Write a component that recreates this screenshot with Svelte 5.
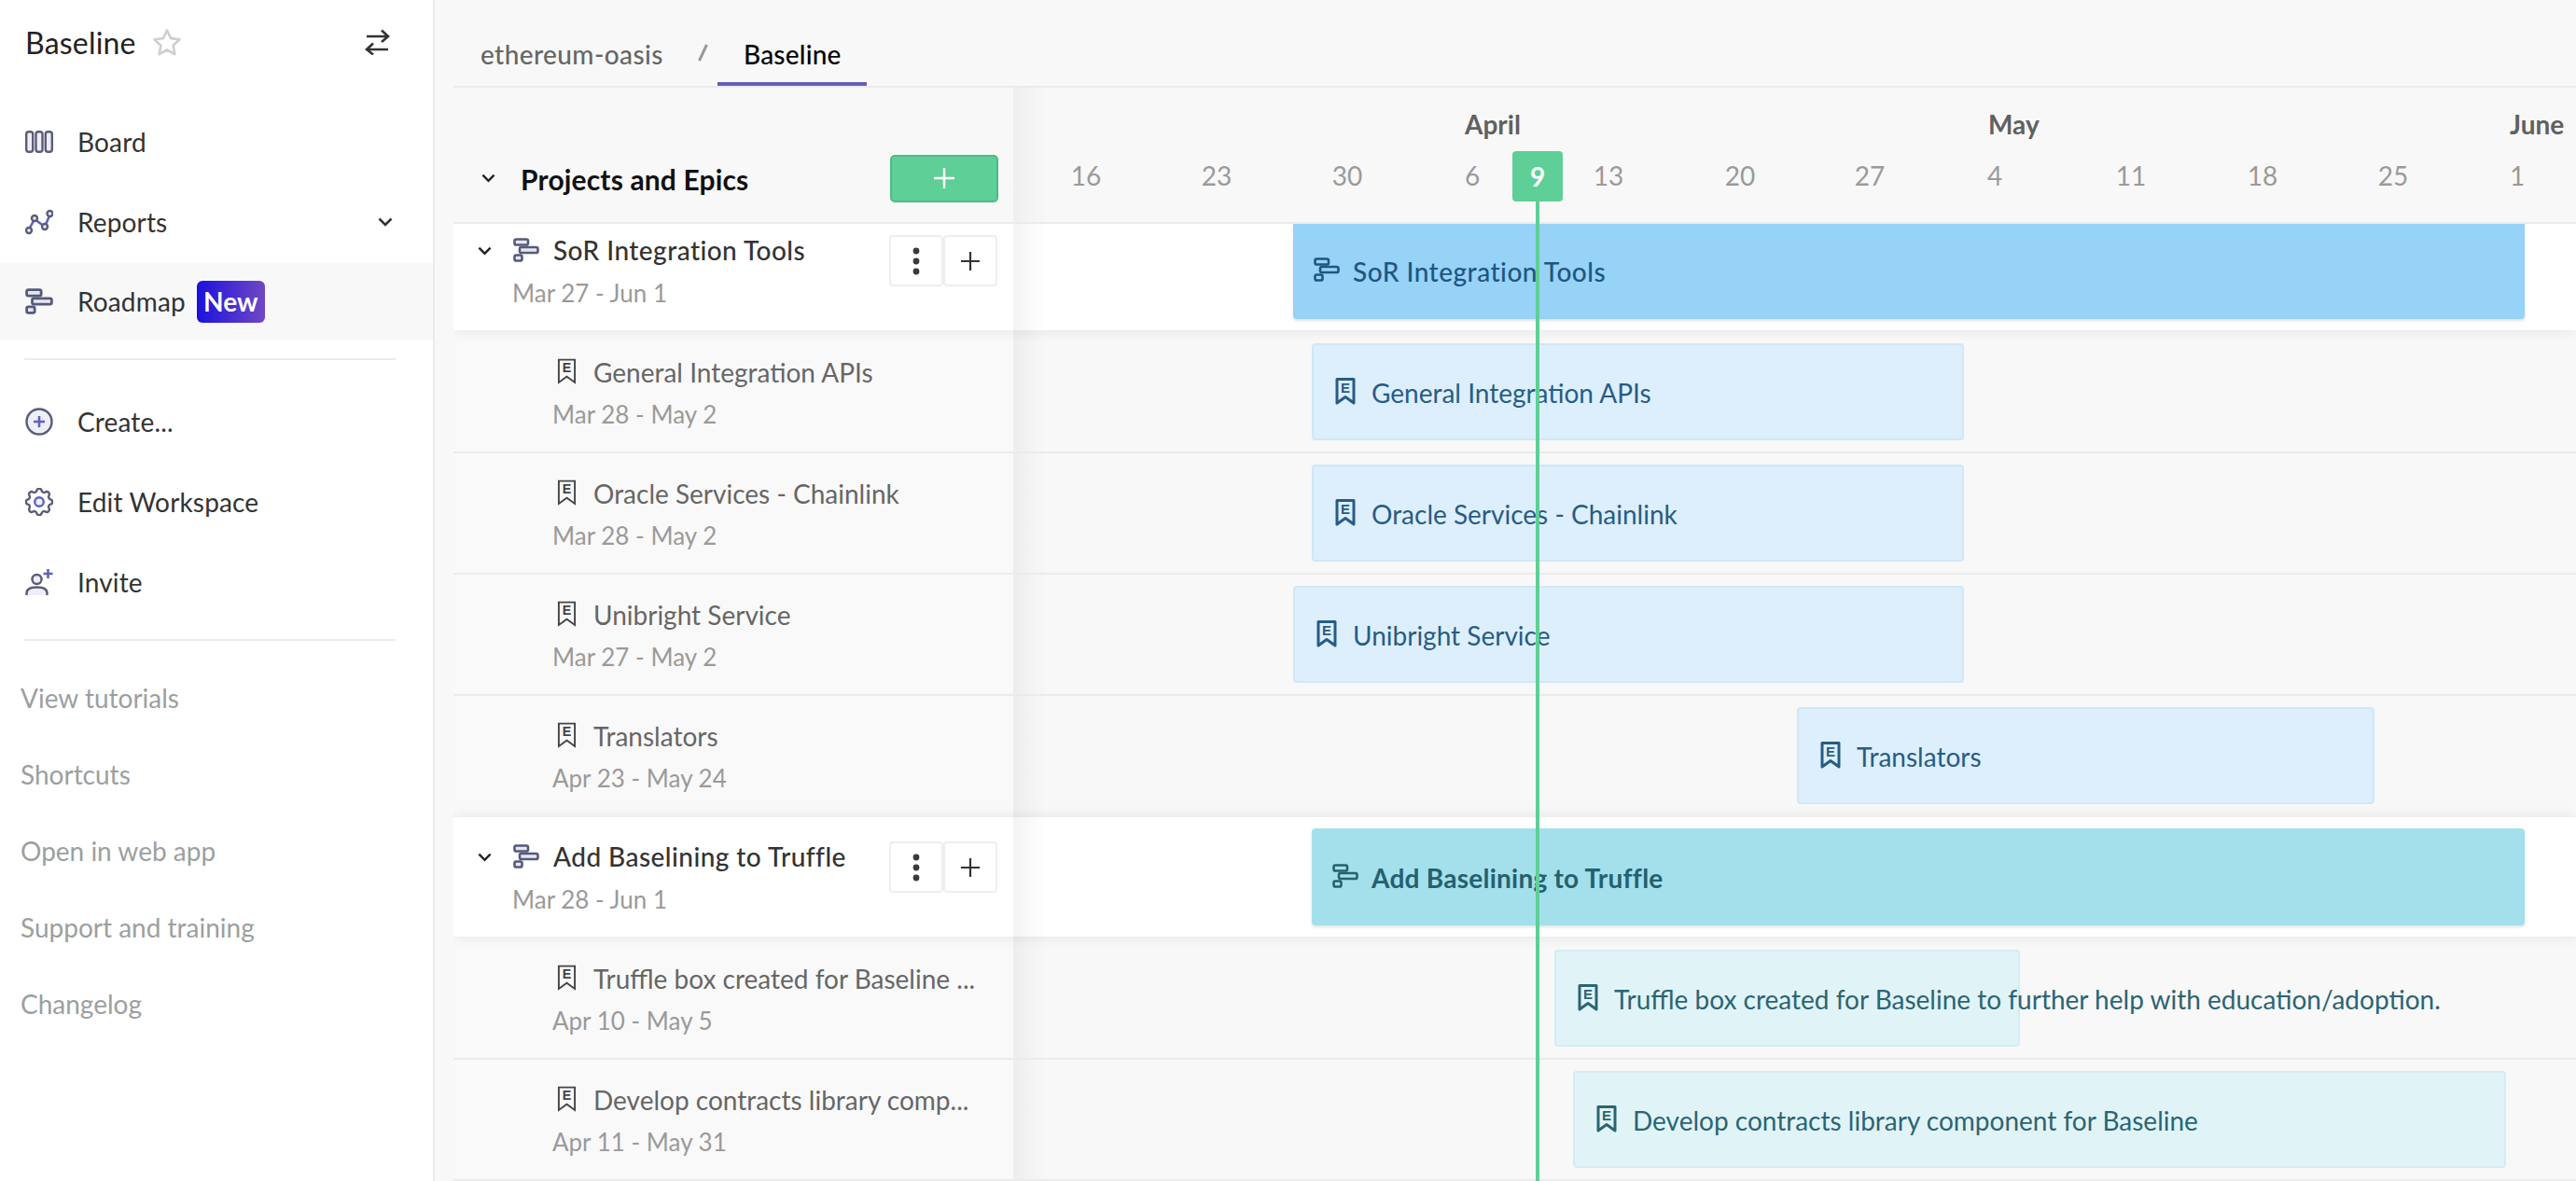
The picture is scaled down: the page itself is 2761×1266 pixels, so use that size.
<script>
  const ORIGIN = 1086;
  const months = [
    { label: 'April', x: 1570 },
    { label: 'May', x: 2131 },
    { label: 'June', x: 2690 }
  ];
  const dates = [
    ['16', 1164], ['23', 1304], ['30', 1444], ['6', 1578], ['13', 1724], ['20', 1865],
    ['27', 2004], ['4', 2138], ['11', 2284], ['18', 2425], ['25', 2565], ['1', 2698]
  ];
  const rows = [
    { kind: 'epic', tone: 'blue', title: 'SoR Integration Tools', range: 'Mar 27 - Jun 1', from: 1386, to: 2706 },
    { kind: 'item', tone: 'blue', title: 'General Integration APIs', range: 'Mar 28 - May 2', from: 1406, to: 2105 },
    { kind: 'item', tone: 'blue', title: 'Oracle Services - Chainlink', range: 'Mar 28 - May 2', from: 1406, to: 2105 },
    { kind: 'item', tone: 'blue', title: 'Unibright Service', range: 'Mar 27 - May 2', from: 1386, to: 2105 },
    { kind: 'item', tone: 'blue', title: 'Translators', range: 'Apr 23 - May 24', from: 1926, to: 2545, last: true },
    { kind: 'epic', tone: 'teal', title: 'Add Baselining to Truffle', range: 'Mar 28 - Jun 1', from: 1406, to: 2706 },
    { kind: 'item', tone: 'teal', title: 'Truffle box created for Baseline to further help with education/adoption.', short: 'Truffle box created for Baseline ...', range: 'Apr 10 - May 5', from: 1666, to: 2165 },
    { kind: 'item', tone: 'teal', title: 'Develop contracts library component for Baseline', short: 'Develop contracts library comp...', range: 'Apr 11 - May 31', from: 1686, to: 2686 }
  ];
  const links = ['View tutorials', 'Shortcuts', 'Open in web app', 'Support and training', 'Changelog'];
</script>

{#snippet roadmapIcon(cls)}
  <svg class={cls} viewBox="0 0 28 26">
    <rect x="1.500" y="1.500" width="14.500" height="6" rx="1.800" />
    <rect x="7" y="10" width="19.500" height="6" rx="1.800" />
    <rect x="1.500" y="18.500" width="8" height="6" rx="1.800" />
  </svg>
{/snippet}

{#snippet bookmarkIcon(cls)}
  <svg class={cls} viewBox="0 0 22 29">
    <path d="M2 1.500h18v25.500l-9-6.500-9 6.500z" />
    <text x="11" y="16" text-anchor="middle">E</text>
  </svg>
{/snippet}

<div class="app">
  <aside class="sidebar">
    <div class="brand">
      <span class="brand-name">Baseline</span>
      <svg class="star" viewBox="0 0 32 30"><path d="M16 2.500l4.100 8.600 9.400 1.200-6.900 6.500 1.800 9.300-8.400-4.600-8.400 4.600 1.800-9.300-6.900-6.500 9.400-1.200z" /></svg>
      <svg class="swap" viewBox="0 0 28 28"><path d="M3 8h23M19 1.500l7 6.500-7 6M26 22H3M10 15.500L3 22l7 5.500" /></svg>
    </div>

    <nav class="nav first">
      <div class="nav-item">
        <svg class="nav-icon" viewBox="0 0 30 24">
          <rect class="line" x="1.200" y="1.200" width="7" height="21.600" rx="2.500" />
          <rect class="line" x="11.500" y="1.200" width="7" height="21.600" rx="2.500" />
          <rect class="line" x="21.800" y="1.200" width="7" height="21.600" rx="2.500" />
        </svg>
        <span>Board</span>
      </div>
      <div class="nav-item">
        <svg class="nav-icon" viewBox="0 0 30 26">
          <path class="accent" d="M4 21l6-11 11 8 6-14" />
          <circle class="line" cx="4" cy="22" r="3" />
          <circle class="line" cx="10" cy="9" r="3" />
          <circle class="line" cx="21" cy="18" r="3" />
          <circle class="line" cx="26.500" cy="4" r="3" />
        </svg>
        <span>Reports</span>
        <svg class="nav-caret" viewBox="0 0 16 10"><path d="M1.500 1.500L8 8l6.500-6.500" /></svg>
      </div>
      <div class="nav-item active">
        {@render roadmapIcon('nav-icon roadmap')}
        <span>Roadmap</span>
        <span class="badge">New</span>
      </div>
    </nav>
    <hr class="rule upper" />
    <nav class="nav">
      <div class="nav-item">
        <svg class="nav-icon" viewBox="0 0 30 30">
          <circle class="line" cx="15" cy="15" r="13.500" />
          <path class="accent" d="M15 9v12M9 15h12" />
        </svg>
        <span>Create...</span>
      </div>
      <div class="nav-item">
        <svg class="nav-icon" viewBox="2.500 2.500 19 19">
          <path class="line thin" d="M10.325 4.317c.426-1.756 2.924-1.756 3.350 0a1.724 1.724 0 002.573 1.066c1.543-.94 3.310.826 2.370 2.370a1.724 1.724 0 001.065 2.572c1.756.426 1.756 2.924 0 3.350a1.724 1.724 0 00-1.066 2.573c.94 1.543-.826 3.310-2.370 2.370a1.724 1.724 0 00-2.572 1.065c-.426 1.756-2.924 1.756-3.350 0a1.724 1.724 0 00-2.573-1.066c-1.543.94-3.310-.826-2.370-2.370a1.724 1.724 0 00-1.065-2.572c-1.756-.426-1.756-2.924 0-3.350a1.724 1.724 0 001.066-2.573c-.94-1.543.826-3.310 2.370-2.370.996.608 2.296.07 2.572-1.065z" />
          <circle class="accent thin" cx="12" cy="12" r="3" />
        </svg>
        <span>Edit Workspace</span>
      </div>
      <div class="nav-item">
        <svg class="nav-icon" viewBox="0 0 30 30">
          <circle class="line" cx="12.500" cy="12" r="5" />
          <path class="line" d="M1.500 29v-2c0-4 4-6.500 11-6.500s11 2.500 11 6.500v2" />
          <path class="accent" d="M24.500 1v10M19.500 6h10" />
        </svg>
        <span>Invite</span>
      </div>
    </nav>
    <hr class="rule lower" />
    <ul class="links">
      {#each links as link}
        <li>{link}</li>
      {/each}
    </ul>
  </aside>

  <main class="main">
    <header class="tabs">
      <span class="crumb">ethereum-oasis</span>
      <span class="slash"></span>
      <span class="tab">Baseline</span>
    </header>

    <section class="gantt">
      <div class="head">
        <div class="head-left">
          <svg class="chev" viewBox="0 0 16 10"><path d="M1.500 1.500L8 8l6.500-6.500" /></svg>
          <span class="head-title">Projects and Epics</span>
          <button class="add" aria-label="Add">
            <svg viewBox="0 0 24 24"><path d="M12 1v22M1 12h22" /></svg>
          </button>
        </div>
        <div class="head-right">
          {#each months as m}
            <span class="month" style:left="{m.x - ORIGIN}px">{m.label}</span>
          {/each}
          {#each dates as [label, x]}
            <span class="date" style:left="{x - ORIGIN}px">{label}</span>
          {/each}
          <span class="today">9</span>
        </div>
      </div>

      <div class="viewport">
        <div class="rows">
          {#each rows as row}
            <div class="row {row.kind} {row.tone}" class:last={row.last}>
              <div class="cell">
                {#if row.kind === 'epic'}
                  <svg class="chev small" viewBox="0 0 16 10"><path d="M1.500 1.500L8 8l6.500-6.500" /></svg>
                  {@render roadmapIcon('cell-icon roadmap')}
                {:else}
                  {@render bookmarkIcon('cell-book')}
                {/if}
                <div class="cell-text">
                  <div class="cell-title">{row.short ?? row.title}</div>
                  <div class="cell-range">{row.range}</div>
                </div>
                {#if row.kind === 'epic'}
                  <div class="actions">
                    <button aria-label="More">
                      <svg viewBox="0 0 10 30"><circle cx="5" cy="4" r="3.400" /><circle cx="5" cy="15" r="3.400" /><circle cx="5" cy="26" r="3.400" /></svg>
                    </button>
                    <button aria-label="Add">
                      <svg class="plus" viewBox="0 0 24 24"><path d="M12 1v22M1 12h22" /></svg>
                    </button>
                  </div>
                {/if}
              </div>
              <div class="track">
                <div class="bar" style:margin-left="{row.from - ORIGIN}px" style:width="{row.to - row.from}px">
                  {#if row.kind === 'epic'}
                    {@render roadmapIcon('bar-icon roadmap')}
                  {:else}
                    {@render bookmarkIcon('bar-book')}
                  {/if}
                  <span class="bar-label">{row.title}</span>
                </div>
              </div>
            </div>
          {/each}
        </div>
      </div>

      <div class="today-line"></div>
    </section>
  </main>
</div>

<style>
  :global(body) {
    margin: 0;
    background: #f8f8f8;
  }
  .app {
    display: flex;
    width: 2761px;
    height: 1266px;
    overflow: hidden;
    font-family: Lato, "Open Sans", sans-serif;
    font-size: 28px;
    color: #333;
    background: #f8f8f8;
  }
  svg {
    display: block;
    flex: none;
  }

  /* sidebar */
  .sidebar {
    box-sizing: border-box;
    width: 466px;
    flex: none;
    background: #fff;
    border-right: 2px solid #ebebeb;
  }
  .brand {
    height: 90px;
    display: flex;
    align-items: center;
    padding: 0 46px 0 27px;
    box-sizing: border-box;
  }
  .brand-name {
    font-size: 32px;
    letter-spacing: 0.2px;
    color: #222;
  }
  .star {
    width: 32px;
    height: 30px;
    margin-left: 17px;
    fill: none;
    stroke: #cfcfcf;
    stroke-width: 2.600;
    stroke-linejoin: round;
  }
  .swap {
    width: 28px;
    height: 28px;
    margin-left: auto;
    fill: none;
    stroke: #333;
    stroke-width: 2.600;
  }
  .nav {
    display: flex;
    flex-direction: column;
  }
  .nav.first {
    margin-top: 19px;
  }
  .nav-item {
    height: 86px;
    display: flex;
    align-items: center;
    padding: 0 43px 0 27px;
  }
  .nav-item.active {
    height: 82px;
    background: #f8f8f8;
    margin-top: 1px;
  }
  .nav-item > span:first-of-type {
    margin-left: 26px;
    letter-spacing: 0.15px;
    color: #333;
  }
  .nav-icon {
    width: 30px;
    height: 30px;
  }
  .line {
    fill: #eeeef8;
    stroke: #5a5c78;
    stroke-width: 2.400;
  }
  .line.thin {
    stroke-width: 1.500;
    fill: #fff;
  }
  .accent {
    fill: none;
    stroke: #6161b8;
    stroke-width: 2.600;
  }
  .accent.thin {
    stroke-width: 1.500;
    fill: #eeeef8;
  }
  .nav-caret {
    width: 16px;
    height: 10px;
    margin-left: auto;
    fill: none;
    stroke: #333;
    stroke-width: 2.600;
  }
  .badge {
    margin-left: 12px;
    width: 73px;
    height: 45px;
    display: flex;
    align-items: center;
    justify-content: center;
    border-radius: 6px;
    color: #fff;
    font-weight: 700;
    background: linear-gradient(90deg, #1a12dd, #7048c4);
  }
  .rule {
    border: 0;
    height: 2px;
    background: #ebebeb;
  }
  .rule.upper {
    margin: 20px 40px 23px 26px;
  }
  .rule.lower {
    margin: 18px 40px 20px 26px;
  }
  .links {
    list-style: none;
    margin: 0;
    padding: 0 0 0 22px;
    color: #9b9fa0;
  }
  .links li {
    height: 82px;
    display: flex;
    align-items: center;
  }

  /* main */
  .main {
    flex: 1;
    min-width: 0;
    display: flex;
    flex-direction: column;
  }
  .tabs {
    height: 94px;
    box-sizing: border-box;
    margin-left: 20px;
    border-bottom: 2px solid #ebebeb;
    display: flex;
    align-items: flex-end;
  }
  .crumb {
    margin-left: 29px;
    height: 92px;
    line-height: 116px;
    letter-spacing: 0.4px;
    color: #666;
    font-weight: 500;
  }
  .slash {
    width: 2.500px;
    height: 19px;
    margin: 0 0 26px 41px;
    background: #999;
    transform: rotate(25deg);
  }
  .tab {
    margin-left: 15px;
    width: 160px;
    box-sizing: border-box;
    height: 92px;
    line-height: 116px;
    text-align: center;
    letter-spacing: 0.2px;
    color: #000;
    font-weight: 500;
    border-bottom: 4px solid #5f60b5;
  }

  .gantt {
    position: relative;
    flex: 1;
    min-height: 0;
    margin-left: 20px;
    display: flex;
    flex-direction: column;
  }
  .head {
    height: 146px;
    flex: none;
    box-sizing: border-box;
    border-bottom: 2px solid #ebebeb;
    display: flex;
    position: relative;
    z-index: 2;
    background: #f8f8f8;
  }
  .head-left {
    width: 600px;
    flex: none;
    box-sizing: border-box;
    padding: 50px 16px 0 30px;
    display: flex;
    align-items: center;
  }
  .chev {
    width: 15px;
    height: 10px;
    fill: none;
    stroke: #222;
    stroke-width: 2.600;
  }
  .head-title {
    margin-left: 27px;
    font-size: 30px;
    font-weight: 700;
    letter-spacing: 0.15px;
    color: #111;
    position: relative;
    top: 1px;
  }
  .add {
    margin-left: auto;
    width: 116px;
    height: 51px;
    box-sizing: border-box;
    padding: 0;
    background: #5ecf96;
    border: 2px solid #53b887;
    border-radius: 5px;
    display: flex;
    align-items: center;
    justify-content: center;
  }
  .add svg {
    width: 24px;
    height: 24px;
    fill: none;
    stroke: #fff;
    stroke-width: 2.500;
  }
  .head-right {
    flex: 1;
    position: relative;
    background: linear-gradient(90deg, #efefef, #f8f8f8 36px);
  }
  .month {
    position: absolute;
    top: 21px;
    line-height: 36px;
    color: #606060;
    font-weight: 700;
  }
  .date {
    position: absolute;
    top: 76px;
    line-height: 36px;
    transform: translateX(-50%);
    color: #9a9a9a;
  }
  .today {
    position: absolute;
    left: 535px;
    top: 68px;
    width: 54px;
    height: 54px;
    border-radius: 4px;
    background: #5ecf96;
    color: #fff;
    font-weight: 700;
    display: flex;
    align-items: center;
    justify-content: center;
  }
  .today-line {
    position: absolute;
    left: 1160px;
    top: 122px;
    bottom: 0;
    width: 4px;
    background: #5ecf96;
    z-index: 3;
  }

  .viewport {
    flex: 1;
    min-height: 0;
    overflow: hidden;
  }
  .rows {
    margin-top: -14px;
  }
  .row {
    display: flex;
    box-sizing: border-box;
    position: relative;
  }
  .row.epic {
    height: 128px;
    z-index: 1;
    box-shadow: 0 0 14px rgba(0, 0, 0, 0.09);
    background: #fff;
  }
  .row.item {
    height: 130px;
    border-bottom: 2px solid #ebebeb;
  }
  .row.epic + .row.item {
    height: 132px;
  }
  .row.item.last {
    border-bottom: 0;
  }
  .cell {
    width: 599px;
    flex: none;
    margin-left: 1px;
    display: flex;
    align-items: flex-start;
    box-sizing: border-box;
    min-width: 0;
    position: relative;
    background: #f9f9f9;
  }
  .epic .cell {
    background: #fff;
    padding: 36px 17px 0 25px;
  }
  .item .cell {
    padding: 28px 20px 0 110px;
  }
  .epic + .item .cell {
    padding-top: 30px;
  }
  .chev.small {
    margin-top: 2px;
  }
  .cell-icon {
    width: 28px;
    height: 26px;
    margin: -7px 0 0 23px;
  }
  .roadmap rect {
    fill: #e6e7f5;
    stroke: #565a78;
    stroke-width: 2.600;
  }
  .cell-book {
    width: 21px;
    height: 28px;
    fill: none;
    stroke: #444;
    stroke-width: 2;
  }
  .cell-book text,
  .bar-book text {
    font-family: "Liberation Sans", sans-serif;
    font-size: 15px;
    font-weight: 700;
    fill: #444;
    stroke: none;
  }
  .cell-text {
    flex: 1;
    min-width: 0;
    position: relative;
  }
  .cell-title {
    line-height: 30px;
    white-space: nowrap;
  }
  .epic .cell-title {
    margin: -9px 0 0 15px;
    font-weight: 500;
    letter-spacing: 0.45px;
    color: #333;
  }
  .item .cell-title {
    margin-left: 18px;
    color: #666;
  }
  .cell-range {
    font-size: 26px;
    line-height: 30px;
    color: #9a9a9a;
    white-space: nowrap;
  }
  .epic .cell-range {
    margin: 16px 0 0 -29px;
  }
  .item .cell-range {
    margin: 15px 0 0 -26px;
  }
  .actions {
    display: flex;
    flex: none;
    margin-top: -10px;
  }
  .actions button {
    width: 58px;
    height: 55px;
    box-sizing: border-box;
    padding: 0;
    background: #fff;
    border: 2px solid #eee;
    border-radius: 4px;
    display: flex;
    align-items: center;
    justify-content: center;
  }
  .actions svg {
    width: 10px;
    height: 30px;
    fill: #3a3a3a;
  }
  .actions svg.plus {
    width: 22px;
    height: 22px;
    fill: none;
    stroke: #333;
    stroke-width: 2.400;
  }
  .track {
    flex: 1;
    min-width: 0;
    background: linear-gradient(90deg, rgba(0, 0, 0, 0.045), rgba(0, 0, 0, 0) 36px);
  }
  .bar {
    box-sizing: border-box;
    height: 104px;
    margin-top: 12px;
    border-radius: 4px;
    display: flex;
    align-items: center;
    white-space: nowrap;
    padding-top: 2px;
  }
  .item .bar {
    border: 2px solid;
    padding-left: 23px;
  }
  .epic + .item .bar {
    margin-top: 14px;
  }
  .bar-label {
    line-height: 36px;
  }
  .epic .bar {
    padding-left: 22px;
    box-shadow: 0 2px 3px rgba(0, 0, 0, 0.12);
    font-weight: 500;
    letter-spacing: 0.5px;
  }
  .bar-icon {
    width: 28px;
    height: 26px;
    margin-right: 14px;
    margin-top: -4px;
  }
  .bar-book {
    width: 22px;
    height: 29px;
    margin-right: 17px;
    margin-top: -4px;
    fill: none;
    stroke: currentColor;
    stroke-width: 3;
    stroke-linejoin: round;
  }
  .bar-book text {
    fill: currentColor;
  }
  .bar .roadmap rect {
    fill: none;
    stroke: currentColor;
  }
  .epic.blue .bar {
    background: #97d2f7;
    color: #1f5680;
  }
  .item.blue .bar {
    background: #ddeffc;
    border-color: #cfe8f9;
    color: #275c85;
  }
  .epic.teal .bar {
    background: #a3e0eb;
    color: #25606f;
    font-weight: 700;
    letter-spacing: 0.25px;
  }
  .item.teal .bar {
    background: #e0f4f8;
    border-color: #d2edf3;
    color: #2c6473;
  }
</style>
